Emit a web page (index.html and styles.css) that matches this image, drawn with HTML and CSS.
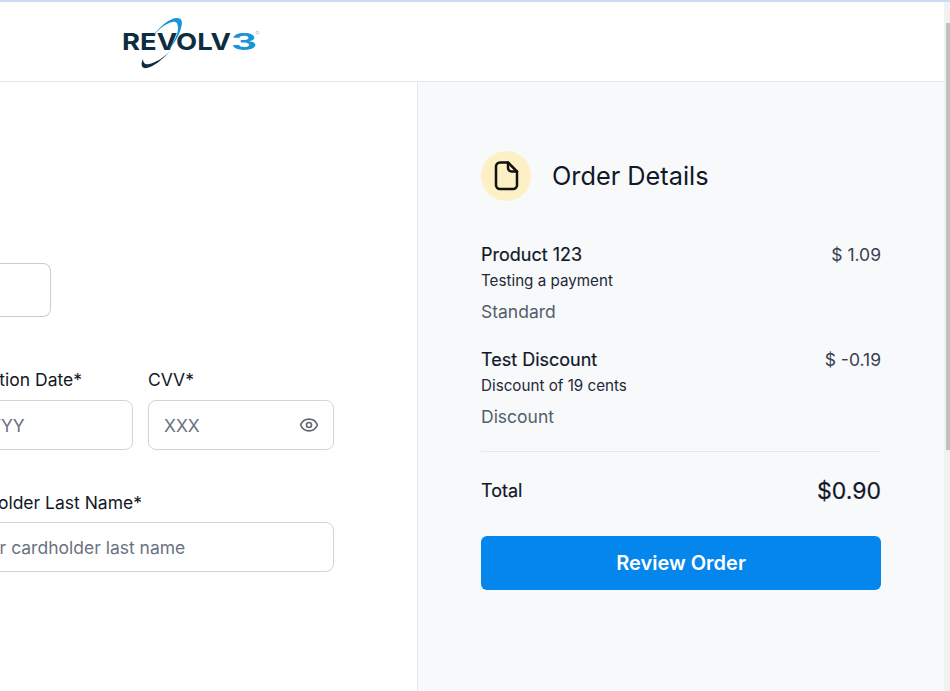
FILE: index.html
```html
<!DOCTYPE html>
<html lang="en">
<head>
<meta charset="utf-8">
<title>Checkout</title>
<link rel="stylesheet" href="styles.css">
</head>
<body>
<div class="page">
  <header class="topbar">
    <svg class="logo" width="140" height="62" viewBox="0 0 140 62" aria-label="Revolv3">
      <path class="swoosh-dark" d="M47 42C40 50 31 57 25 58C20 59 18 55 21 49C21 53 23 55 27 54C33 53 41 48 47 42Z"/>
      <text class="logo-dark" x="0" y="40" textLength="109" lengthAdjust="spacingAndGlyphs">REVOLV</text>
      <text class="logo-blue" x="109" y="40" textLength="26" lengthAdjust="spacingAndGlyphs">3</text>
      <path class="swoosh-blue" d="M31 26C38 16 48 8 55 8C60 8 61 12 59 18C57 26 52 34 46 40C52 32 56 24 56 18C56 13 54 11 51 12C44 13 37 19 31 26Z"/>
      <circle class="logo-reg" cx="135.5" cy="22.5" r="1.3"/>
    </svg>
  </header>
  <main class="content">
    <section class="form">
      <div class="input stub-top"></div>
      <div class="row row-cvv">
        <div class="field field-exp">
          <label class="label">Expiration Date*</label>
          <div class="input"><span class="ph">MM/YY</span></div>
        </div>
        <div class="field field-cvv">
          <label class="label">CVV*</label>
          <div class="input input-cvv">
            <span class="ph">XXX</span>
            <svg class="eye" width="20" height="20" viewBox="0 0 24 24" fill="none" stroke="#5f6773" stroke-width="2" stroke-linecap="round" stroke-linejoin="round"><path d="M2.062 12.348a1 1 0 0 1 0-.696 10.75 10.75 0 0 1 19.876 0 1 1 0 0 1 0 .696 10.75 10.75 0 0 1-19.876 0"/><circle cx="12" cy="12" r="3"/></svg>
          </div>
        </div>
      </div>
      <div class="field field-last">
        <label class="label">Cardholder Last Name*</label>
        <div class="input"><span class="ph">Enter cardholder last name</span></div>
      </div>
    </section>
    <aside class="summary">
      <div class="summary-head">
        <span class="badge">
          <svg width="32" height="32" viewBox="0 0 32 32" fill="none" stroke="#111111" stroke-width="2.5" stroke-linecap="round" stroke-linejoin="round"><path d="M18 2.5H10a4 4 0 0 0-4 4V25a4 4 0 0 0 4 4h13a4 4 0 0 0 4-4V11.5Z"/><path d="M18 2.5V8a3.5 3.5 0 0 0 3.5 3.5H27"/></svg>
        </span>
        <h2 class="summary-title">Order Details</h2>
      </div>
      <div class="items">
        <div class="item">
          <div class="item-top"><span class="item-name">Product 123</span><span class="item-price">$ 1.09</span></div>
          <div class="item-desc">Testing a payment</div>
          <div class="item-type">Standard</div>
        </div>
        <div class="item">
          <div class="item-top"><span class="item-name">Test Discount</span><span class="item-price">$ -0.19</span></div>
          <div class="item-desc">Discount of 19 cents</div>
          <div class="item-type">Discount</div>
        </div>
      </div>
      <div class="total"><span class="total-label">Total</span><span class="total-value">$0.90</span></div>
      <button class="review">Review Order</button>
    </aside>
  </main>
  <div class="scrolltrack"><div class="scrollthumb"></div></div>
  <div class="topstrip"></div>
</div>
</body>
</html>
```
FILE: styles.css
```css
* { box-sizing: border-box; }
html, body { margin: 0; height: 100%; overflow: hidden; }
body { font-family: Inter, "Liberation Sans", sans-serif; color: #111827; background: #fff; }
.page { position: relative; width: 950px; height: 691px; overflow: hidden; display: flex; flex-direction: column; }
.topstrip { position: absolute; top: 0; left: 0; right: 0; height: 2px; background: #c8dcf4; }
.scrolltrack { position: absolute; top: 0; right: 0; bottom: 0; width: 6px; background: #f1f1f1; }
.scrollthumb { margin: 23px 0 0 2px; width: 4px; height: 427px; background: #c1c1c1; }
.topbar { height: 82px; padding: 10px 0 0 122px; border-bottom: 1px solid #e5e7eb; flex: none; }
.logo { display: block; }
.logo-dark, .logo-blue { font-family: Inter, "Liberation Sans", sans-serif; font-weight: 700; font-size: 23.5px; }
.logo-dark { fill: #0d2e40; }
.logo-blue { fill: #1a94d6; }
.logo-reg { fill: none; stroke: #9fb0bc; stroke-width: 0.7; }
.swoosh-blue { fill: #1a94d6; }
.swoosh-dark { fill: #0d2e40; }
.content { flex: 1; display: flex; min-height: 0; }
.form { width: 418px; flex: none; border-right: 1px solid #e5e7eb; padding: 181px 83px 0 0; overflow: hidden; }
.input { height: 50px; border: 1px solid #d0d5dc; border-radius: 8px; background: #fff; display: flex; align-items: center; padding: 0 15px; font-size: 17.5px; flex: none; }
.stub-top { width: 51px; height: 54px; border-left: 0; border-top-left-radius: 0; border-bottom-left-radius: 0; border-color: #c8ced6; }
.row-cvv { display: flex; gap: 15px; margin-top: 51px; justify-content: flex-end; }
.field { display: flex; flex-direction: column; }
.label { font-size: 17.5px; line-height: 24px; margin-bottom: 8px; color: #111827; white-space: nowrap; }
.field-exp { width: 133px; align-items: flex-end; }
.field-exp .label { margin-right: 51px; }
.field-exp .input { width: 186px; }
.field-cvv { width: 186px; }
.input-cvv { justify-content: space-between; padding-right: 14px; }
.ph { color: #6b7280; white-space: nowrap; }
.field-last { margin-top: 41px; align-items: flex-end; }
.field-last .label { margin-bottom: 7px; margin-right: 192px; }
.field-last .input { width: 387px; }
.summary { flex: 1; background: #f8f9fb; padding: 69px 69px 0 63px; }
.summary-head { display: flex; align-items: center; gap: 21px; margin-bottom: 41px; }
.badge { width: 50px; height: 50px; border-radius: 50%; background: #fdf0c4; display: flex; align-items: center; justify-content: center; }
.summary-title { margin: 0; font-size: 25.3px; line-height: 32px; font-weight: 400; color: #111827; }
.items { display: flex; flex-direction: column; gap: 23px; }
.item-top { display: flex; justify-content: space-between; font-size: 18px; line-height: 24px; padding-top: 1px; }
.item-name { font-weight: 400; color: #111827; -webkit-text-stroke: 0.2px #111827; }
.item-price { color: #374151; font-size: 17.5px; }
.item-desc { font-size: 15.2px; line-height: 20px; margin-top: 4px; color: #1f2937; }
.item-type { font-size: 17.5px; line-height: 24px; margin-top: 9px; color: #535e6c; }
.total { display: flex; justify-content: space-between; align-items: center; border-top: 1px solid #e5e7eb; margin-top: 22px; padding: 14px 0 0 0; height: 63px; }
.total-label { font-size: 18px; font-weight: 400; -webkit-text-stroke: 0.2px #111827; }
.total-value { font-size: 23px; font-weight: 400; line-height: 32px; padding-top: 1px; -webkit-text-stroke: 0.2px #111827; }
.review { display: block; width: 400px; height: 54px; margin-top: 22px; border: 0; border-radius: 6px; background: #0486ec; color: #fff; font: 600 20px Inter, "Liberation Sans", sans-serif; }
```
